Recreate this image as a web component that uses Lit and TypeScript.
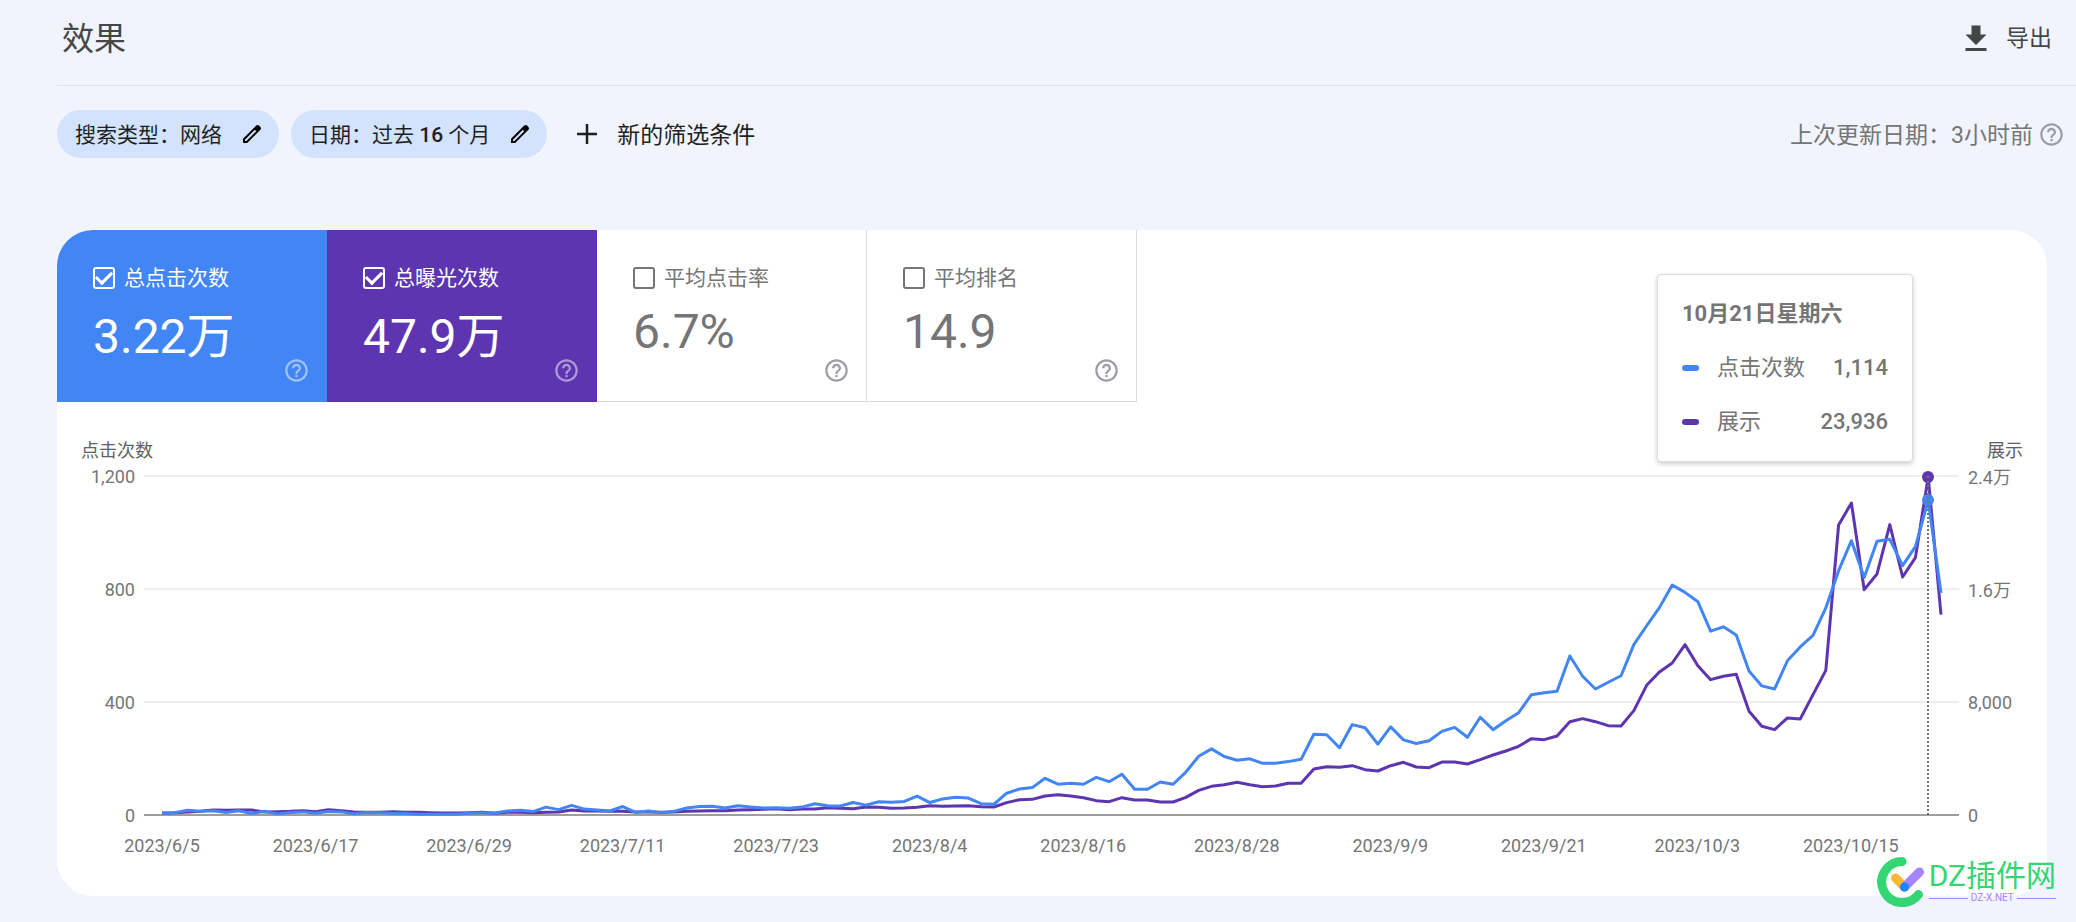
import { LitElement, html, css, svg } from "lit";
import { customElement, property } from "lit/decorators.js";
import { classMap } from "lit/directives/class-map.js";
import { styleMap } from "lit/directives/style-map.js";

const CLICKS = [
  6, 8, 17, 13, 15, 9, 15, 5, 13, 4, 9, 11, 6, 12, 11, 4, 9, 8, 6, 5, 3, 3, 3, 3, 6, 8, 7, 14, 17, 12, 28, 19, 34, 21,
  18, 14, 30, 9, 14, 8, 13, 25, 30, 31, 25, 33, 28, 25, 26, 24, 28, 40, 33, 32, 44, 35, 47, 45, 48, 67, 44, 57, 63, 60,
  40, 38, 77, 92, 97, 130, 109, 112, 109, 133, 118, 144, 91, 91, 117, 109, 152, 208, 234, 207, 194, 199, 183, 183, 189,
  197, 286, 284, 238, 320, 309, 251, 312, 266, 253, 263, 296, 310, 275, 346, 302, 334, 362, 426, 433, 438, 563, 491,
  446, 470, 493, 603, 670, 734, 814, 788, 755, 651, 666, 637, 510, 457, 446, 546, 595, 636, 733, 865, 971, 841, 969,
  976, 883, 950, 1114, 786,
];

const IMPRESSIONS = [
  142, 165, 212, 260, 354, 330, 354, 354, 212, 236, 260, 307, 236, 378, 307, 212, 189, 189, 236, 189, 189, 165, 142,
  142, 165, 189, 118, 189, 189, 165, 189, 212, 354, 283, 283, 260, 260, 212, 212, 189, 212, 260, 283, 307, 307, 354,
  378, 401, 448, 378, 425, 425, 519, 472, 448, 566, 543, 472, 496, 543, 661, 614, 637, 661, 590, 566, 873, 1086, 1109,
  1345, 1440, 1345, 1227, 1015, 944, 1227, 1062, 1062, 920, 920, 1251, 1746, 2030, 2148, 2313, 2148, 2006, 2053, 2242,
  2242, 3257, 3422, 3375, 3493, 3210, 3115, 3493, 3729, 3398, 3351, 3752, 3752, 3611, 3918, 4248, 4531, 4862, 5404,
  5334, 5593, 6608, 6820, 6608, 6325, 6301, 7387, 9180, 10124, 10762, 12060, 10573, 9582, 9818, 9959, 7340, 6278, 6042,
  6868, 6797, 8520, 10242, 20532, 22090, 15954, 17063, 20556, 16850, 18219, 23936, 14184,
];

const MAX_CLICKS = 1200;
const MAX_IMPRESSIONS = 24000;
const LAST_DAY = CLICKS.length - 1;
const HOVERED_DAY = 138;

const DATES = [
  "2023/6/5", "2023/6/17", "2023/6/29", "2023/7/11", "2023/7/23", "2023/8/4",
  "2023/8/16", "2023/8/28", "2023/9/9", "2023/9/21", "2023/10/3", "2023/10/15",
];

const points = (values: number[], max: number) =>
  values.map((v, day) => `${day},${(1000 * (1 - v / max)).toFixed(1)}`).join(" ");

const helpIcon = html`<svg class="help" viewBox="0 0 24 24" aria-hidden="true">
  <path
    d="M11 18h2v-2h-2v2zm1-16C6.48 2 2 6.48 2 12s4.48 10 10 10 10-4.48 10-10S17.52 2 12 2zm0 18c-4.41 0-8-3.59-8-8s3.59-8 8-8 8 3.59 8 8-3.59 8-8 8zm0-14c-2.21 0-4 1.79-4 4h2c0-1.1.9-2 2-2s2 .9 2 2c0 2-3 1.75-3 5h2c0-2.25 3-2.5 3-5 0-2.21-1.79-4-4-4z"
  />
</svg>`;

const pencilIcon = html`<svg class="pencil" viewBox="0 0 24 24" aria-hidden="true">
  <path
    d="M20.41 4.94l-1.35-1.35c-.78-.78-2.05-.78-2.83 0L3 16.82V21h4.18L20.41 7.77c.79-.78.79-2.05 0-2.83zM6.41 19.06L5 19v-1.36l9.82-9.82 1.41 1.41z"
  />
</svg>`;

const base = css`
  * {
    box-sizing: border-box;
  }
  button {
    font: inherit;
    color: inherit;
    background: none;
    border: 0;
    padding: 0;
    cursor: pointer;
  }
  .help {
    display: block;
    width: 27px;
    height: 27px;
    fill: #9a9da3;
  }
`;

@customElement("metric-tile")
class MetricTile extends LitElement {
  @property() label = "";
  @property() value = "";
  @property() tone = "";
  @property({ type: Boolean }) checked = false;

  static styles = [
    base,
    css`
      :host {
        display: block;
        flex: 0 1 270px;
      }
      .tile {
        position: relative;
        height: 172px;
        padding: 34px 0 0 36px;
        color: #757575;
        border: solid #dadce0;
        border-width: 0 1px 1px 0;
      }
      .tile.on {
        color: #fff;
      }
      .tile.clicks {
        background: #4285f4;
        border-color: #4285f4;
      }
      .tile.impressions {
        background: #5e35b1;
        border-color: #5e35b1;
      }
      .name {
        display: flex;
        align-items: center;
        gap: 9px;
        height: 28px;
        margin-bottom: 4px;
        font-size: 21px;
        line-height: 28px;
        white-space: nowrap;
      }
      .box {
        appearance: none;
        flex: none;
        display: grid;
        place-items: center;
        width: 22px;
        height: 22px;
        margin: 0;
        color: inherit;
        border: 2px solid currentColor;
        border-radius: 3px;
      }
      .box:checked::before {
        content: "";
        width: 13px;
        height: 7px;
        margin-bottom: 4px;
        border: solid currentColor;
        border-width: 0 0 3px 3px;
        rotate: -45deg;
      }
      .value {
        font-size: 48px;
        line-height: 72px;
        white-space: nowrap;
      }
      .on .value {
        line-height: 82px;
      }
      .more {
        position: absolute;
        right: 16px;
        bottom: 17px;
      }
      .on .help {
        fill: #fff;
        opacity: 0.5;
      }
    `,
  ];

  render() {
    return html`<div class=${classMap({ tile: true, on: this.checked, [this.tone || "plain"]: true })}>
      <label class="name"><input class="box" type="checkbox" .checked=${this.checked} />${this.label}</label>
      <div class="value">${this.value}</div>
      <button class="more" aria-label="帮助">${helpIcon}</button>
    </div>`;
  }
}

@customElement("trend-chart")
class TrendChart extends LitElement {
  static styles = [
    base,
    css`
      :host {
        display: block;
        padding: 37px 0 39px;
        color: #757575;
        font-size: 18px;
      }
      .titles {
        display: flex;
        justify-content: space-between;
        padding: 0 24px;
        margin-bottom: 13px;
        line-height: 24px;
        color: #616161;
      }
      .grid {
        display: grid;
        grid-template-columns: 78px 1fr 79px;
        column-gap: 9px;
      }
      .axis {
        display: flex;
        flex-direction: column;
        justify-content: space-between;
      }
      .tick {
        display: flex;
        align-items: center;
        height: 0;
      }
      .left .tick {
        justify-content: flex-end;
      }
      .plot {
        position: relative;
        height: 339px;
        padding: 0 18px;
      }
      .rules {
        position: absolute;
        inset: -1px 0;
        display: flex;
        flex-direction: column;
        justify-content: space-between;
      }
      .rule {
        height: 2px;
        background: #eee;
      }
      .rule:last-child {
        background: #9e9e9e;
      }
      .series {
        position: relative;
        height: 100%;
      }
      .lines {
        display: block;
        width: 100%;
        height: 100%;
        overflow: visible;
      }
      .line {
        fill: none;
        stroke-width: 3px;
        stroke-linejoin: round;
        vector-effect: non-scaling-stroke;
      }
      .line.clicks {
        stroke: #4285f4;
      }
      .line.impressions {
        stroke: #5e35b1;
      }
      .dot {
        position: absolute;
        width: 12px;
        height: 12px;
        border-radius: 50%;
        translate: -50% -50%;
      }
      .cursor {
        position: absolute;
        top: 0;
        bottom: 0;
        border-left: 2px dotted #757575;
        translate: -50% 0;
      }
      .clicks {
        background: #4285f4;
      }
      .impressions {
        background: #5e35b1;
      }
      .dates {
        grid-column: 2;
        display: flex;
        justify-content: space-between;
        padding: 20px 108px 0 18px;
        line-height: 22px;
      }
      .date {
        display: flex;
        justify-content: center;
        width: 0;
        white-space: nowrap;
      }
      .tip {
        position: absolute;
        right: 46px;
        bottom: 353px;
        width: 256px;
        padding: 25px 24px;
        background: #fff;
        border: 1px solid #dadce0;
        border-radius: 4px;
        box-shadow: 0 2px 5px rgba(0, 0, 0, 0.2);
        font-size: 22px;
        line-height: 28px;
        display: grid;
        gap: 26px;
      }
      .day {
        font-weight: 700;
      }
      .row {
        display: flex;
        align-items: center;
      }
      .swatch {
        width: 17px;
        height: 6px;
        margin-right: 18px;
        border-radius: 3px;
      }
      .count {
        margin-left: auto;
        font-weight: 500;
      }
    `,
  ];

  private dot(kind: string, value: number, max: number) {
    const place = { left: `${(100 * HOVERED_DAY) / LAST_DAY}%`, top: `${100 * (1 - value / max)}%` };
    return html`<span class="dot ${kind}" style=${styleMap(place)}></span>`;
  }

  render() {
    const tick = (t: string) => html`<div class="tick">${t}</div>`;
    return html`
      <div class="titles"><span>点击次数</span><span>展示</span></div>
      <div class="grid">
        <div class="axis left">${["1,200", "800", "400", "0"].map(tick)}</div>
        <div class="plot">
          <div class="rules">${[0, 1, 2, 3].map(() => html`<div class="rule"></div>`)}</div>
          <div class="series">
            <svg class="lines" viewBox="0 0 ${LAST_DAY} 1000" preserveAspectRatio="none" role="img" aria-label="效果">
              ${svg`<polyline class="line impressions" points=${points(IMPRESSIONS, MAX_IMPRESSIONS)} />
              <polyline class="line clicks" points=${points(CLICKS, MAX_CLICKS)} />`}
            </svg>
            ${this.dot("impressions", IMPRESSIONS[HOVERED_DAY], MAX_IMPRESSIONS)}
            ${this.dot("clicks", CLICKS[HOVERED_DAY], MAX_CLICKS)}
            <span class="cursor" style=${styleMap({ left: `${(100 * HOVERED_DAY) / LAST_DAY}%` })}></span>
          </div>
          <div class="tip">
            <div class="day">10月21日星期六</div>
            <div class="row"><span class="swatch clicks"></span>点击次数<span class="count">1,114</span></div>
            <div class="row"><span class="swatch impressions"></span>展示<span class="count">23,936</span></div>
          </div>
        </div>
        <div class="axis right">${["2.4万", "1.6万", "8,000", "0"].map(tick)}</div>
        <div class="dates">${DATES.map((d) => html`<span class="date">${d}</span>`)}</div>
      </div>
    `;
  }
}

@customElement("site-mark")
class SiteMark extends LitElement {
  static styles = css`
    :host {
      display: flex;
      align-items: center;
      gap: 2px;
    }
    .logo {
      width: 50px;
      height: 50px;
    }
    .name {
      font-size: 30px;
      line-height: 32px;
      color: #33d673;
      white-space: nowrap;
    }
    .site {
      display: flex;
      align-items: center;
      gap: 3px;
      font-size: 10px;
      line-height: 12px;
      color: #a584ff;
    }
    .site::before,
    .site::after {
      content: "";
      flex: 1;
      height: 1px;
      background: currentColor;
    }
  `;

  render() {
    return html`
      <svg class="logo" viewBox="0 0 50 50" aria-hidden="true" fill="none" stroke-width="9" stroke-linecap="round">
        <path d="M25 4.5A20.5 20.5 0 1 0 41.5 37.500" stroke="#33d673" />
        <path d="M18.500 21L27.500 30" stroke="#ffb73a" />
        <path d="M42.500 15L27.500 30" stroke="#a584ff" />
        <circle cx="27.500" cy="30" r="4.500" fill="#1a85ff" />
      </svg>
      <div>
        <div class="name">DZ插件网</div>
        <div class="site">DZ-X.NET</div>
      </div>
    `;
  }
}

@customElement("app-root")
class AppRoot extends LitElement {
  static styles = [
    base,
    css`
      :host {
        display: block;
        box-sizing: border-box;
        position: relative;
        min-height: 100vh;
        padding: 0 0 25px 57px;
        background: #f1f4fd;
        font-family: Roboto, "Noto Sans CJK SC", sans-serif;
        color: #1f1f1f;
      }
      .header {
        display: flex;
        align-items: center;
        justify-content: space-between;
        height: 86px;
        padding: 0 24px 8px 5px;
        border-bottom: 1px solid #dde3e0;
        color: #444746;
      }
      .title {
        margin: 0;
        font-size: 32px;
        line-height: 40px;
        font-weight: 400;
      }
      .export {
        display: flex;
        align-items: center;
        gap: 12px;
        font-size: 23px;
        line-height: 28px;
      }
      .arrow {
        width: 36px;
        height: 36px;
        fill: #444746;
      }
      .filters {
        display: flex;
        align-items: center;
        gap: 12px;
        height: 48px;
        margin: 24px 11px 72px 0;
      }
      .chip {
        display: flex;
        align-items: center;
        gap: 18px;
        height: 48px;
        padding: 0 15px 0 18px;
        border-radius: 24px;
        background: #d3e3fd;
        font-size: 21px;
        white-space: nowrap;
      }
      .text {
        padding-bottom: 3px;
      }
      .months {
        font-weight: 500;
      }
      .pencil {
        width: 24px;
        height: 24px;
      }
      .add {
        display: flex;
        align-items: center;
        gap: 16px;
        margin-left: 14px;
        font-size: 23px;
        white-space: nowrap;
      }
      .plus {
        width: 28px;
        height: 28px;
      }
      .updated {
        display: flex;
        align-items: center;
        gap: 5px;
        margin-left: auto;
        font-size: 23px;
        color: #757575;
        white-space: nowrap;
      }
      .card {
        margin-right: 29px;
        border-radius: 36px;
        background: #fff;
      }
      .tiles {
        display: flex;
        border-radius: 36px 0 0 0;
        overflow: hidden;
      }
      .mark {
        position: absolute;
        right: 20px;
        bottom: 15px;
      }
    `,
  ];

  render() {
    return html`
      <header class="header">
        <h1 class="title">效果</h1>
        <button class="export">
          <svg class="arrow" viewBox="0 0 24 24" aria-hidden="true">
            <path d="M19 9h-4V3H9v6H5l7 7 7-7zM5 18v2h14v-2H5z" />
          </svg>
          导出
        </button>
      </header>
      <div class="filters">
        <button class="chip"><span class="text">搜索类型：网络</span>${pencilIcon}</button>
        <button class="chip">
          <span class="text">日期：过去 <span class="months">16</span> 个月</span>${pencilIcon}
        </button>
        <button class="add">
          <svg class="plus" viewBox="0 0 28 28" aria-hidden="true">
            <path d="M14 4v20M4 14h20" fill="none" stroke="currentColor" stroke-width="2.500" />
          </svg>
          <span class="text">新的筛选条件</span>
        </button>
        <div class="updated">
          <span class="text">上次更新日期：3小时前</span><button aria-label="帮助">${helpIcon}</button>
        </div>
      </div>
      <main class="card">
        <div class="tiles">
          <metric-tile label="总点击次数" value="3.22万" tone="clicks" checked></metric-tile>
          <metric-tile label="总曝光次数" value="47.9万" tone="impressions" checked></metric-tile>
          <metric-tile label="平均点击率" value="6.7%"></metric-tile>
          <metric-tile label="平均排名" value="14.9"></metric-tile>
        </div>
        <trend-chart></trend-chart>
      </main>
      <site-mark class="mark"></site-mark>
    `;
  }
}
